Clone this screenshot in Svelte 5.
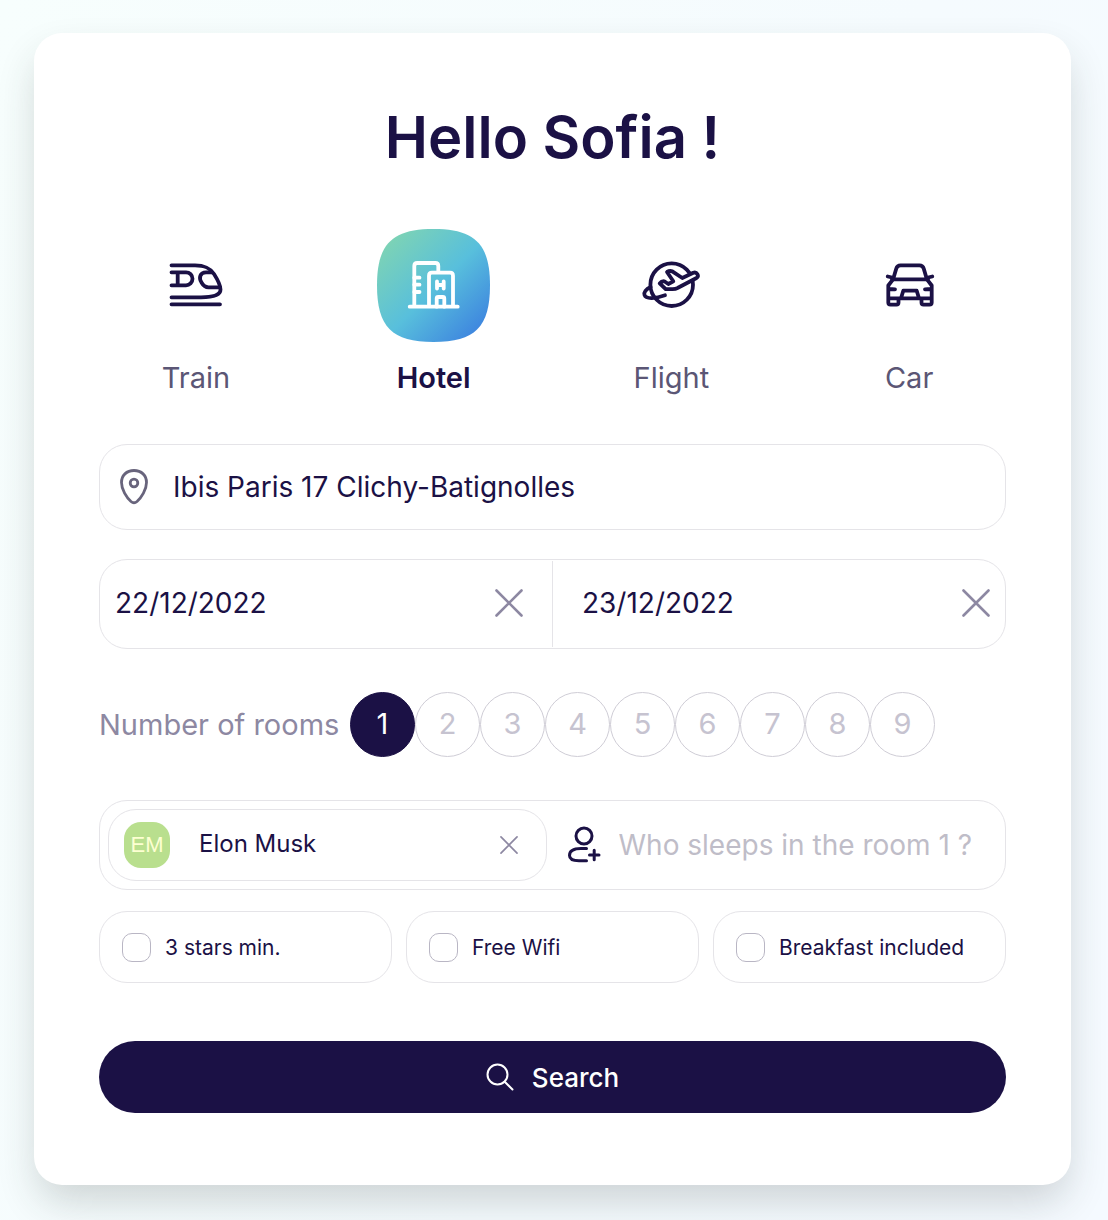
<script lang="ts">
	const tabs = ['Train', 'Hotel', 'Flight', 'Car'];
	const rooms = [1, 2, 3, 4, 5, 6, 7, 8, 9];
	const options = ['3 stars min.', 'Free Wifi', 'Breakfast included'];

	let activeTab = $state('Hotel');
	let activeRoom = $state(1);
	let place = $state('Ibis Paris 17 Clichy-Batignolles');
	let checkIn = $state('22/12/2022');
	let checkOut = $state('23/12/2022');
	let guest = $state('');
	let hasGuest = $state(true);
</script>

{#snippet cross()}
	<svg class="cross" viewBox="0 0 28 28" aria-hidden="true">
		<path d="M1.5 1.5 26.5 26.5M26.5 1.5 1.5 26.5" />
	</svg>
{/snippet}

<main class="card">
	<h1>Hello Sofia !</h1>

	<nav class="tabs">
		{#each tabs as tab}
			<button class="tab" class:active={activeTab === tab} onclick={() => (activeTab = tab)}>
				<svg class="tab-icon" viewBox="0 0 113 113" aria-hidden="true">
					{#if activeTab === tab}
						<defs>
							<linearGradient id="tile" x1="0" y1="0" x2="1" y2="1">
								<stop offset="0.1" stop-color="#7dd3b5" />
								<stop offset="0.52" stop-color="#58bfdc" />
								<stop offset="0.9" stop-color="#3e86df" />
							</linearGradient>
						</defs>
						<path
							class="tile"
							fill="url(#tile)"
							d="M56.5 0C98 0 113 15 113 56.5S98 113 56.5 113 0 98 0 56.5 15 0 56.5 0Z"
						/>
					{/if}
					{#if tab === 'Train'}
						<path d="M32.5 36.3H56C66 36.3 71 39 75 45C78.5 50.5 81.5 56 81.5 60.5C81.5 66 74 68.3 62 68.3H32.5M32.5 75.3H81" />
						<path d="M32.5 43.3H47A6.5 6.5 0 0 1 47 56.3H32.5M38.7 43.3V56.3M73 43.3H67C61 43.3 59.5 49 62.5 53.5C64.5 57 66 58.3 69.5 58.3H81" />
					{:else if tab === 'Hotel'}
						<path d="M32.7 77.7H80.7M37.3 77.7V37Q37.3 34 40.3 34H58.3Q61.3 34 61.3 37V43.7M52 77.7V46.7Q52 43.7 55 43.7H73Q76 43.7 76 46.7V77.7" />
						<path d="M37.3 48.7H42.5M37.3 55.7H42.5M37.3 63H42.5M60 52.5V59.5M66.7 52.5V59.5M60 56H66.7M59.7 77.7V69.5Q59.7 68 61.2 68H65.8Q67.3 68 67.3 69.5V77.7" />
					{:else if tab === 'Flight'}
						<circle cx="56.7" cy="55.7" r="21.3" />
						<path class="plane" d="M78.3 43.7C82 42.5 84.5 47 81.5 49L63 58.8Q60.5 60.2 57.5 60.2H50.7L44.7 54.3Q46.5 52 49.3 52.3L53.3 55 58.3 52.3 52 43Q54.5 41.5 57.3 42.3L67.3 49Z" />
						<path d="M35.5 58C31 60 28.5 63.5 29.5 66C31 70.5 41 69.5 50 66.3" />
					{:else}
						<path d="M40.5 49 43.3 39.5Q44.2 36.3 47.5 36.3H66.5Q69.8 36.3 70.7 39.5L73.5 49M34.7 47.5 39 48.5M79.3 47.5 75 48.5M39 50.3H75" />
						<path d="M40 50.3 35.3 56.5V73.5Q35.3 75.7 37.5 75.7H43.5Q45.5 75.7 45.5 73.5V69.5M74 50.3 78.7 56.5V73.5Q78.7 75.7 76.5 75.7H70.5Q68.5 75.7 68.5 73.5V69.5M35.3 69.3H78.7M48 69.3 50.3 61.7H63.7L66 69.3M36.5 60 42 60.3M77.5 60 72 60.3" />
					{/if}
				</svg>
				<span>{tab}</span>
			</button>
		{/each}
	</nav>

	<form onsubmit={(e) => e.preventDefault()}>
		<div class="field place">
			<svg class="pin" viewBox="0 0 30 36" aria-hidden="true">
				<path d="M15 1.5C7.500 1.5 2.5 6.5 2.5 13.5C2.5 20.5 7.5 28.5 12 32.500Q15 35 18 32.5C22.5 28.5 27.5 20.5 27.5 13.5C27.5 6.5 22.5 1.5 15 1.5Z" />
				<circle cx="15" cy="14" r="3.8" />
			</svg>
			<input type="text" aria-label="Destination" bind:value={place} />
		</div>

		<div class="field dates">
			<div class="date">
				<input type="text" aria-label="Check-in" bind:value={checkIn} />
				<button type="button" aria-label="Clear check-in" onclick={() => (checkIn = '')}>
					{@render cross()}
				</button>
			</div>
			<div class="date">
				<input type="text" aria-label="Check-out" bind:value={checkOut} />
				<button type="button" aria-label="Clear check-out" onclick={() => (checkOut = '')}>
					{@render cross()}
				</button>
			</div>
		</div>

		<div class="rooms">
			<span class="rooms-label" id="rooms-label">Number of rooms</span>
			<div class="room-list" role="group" aria-labelledby="rooms-label">
				{#each rooms as room}
					<button
						type="button"
						class="room"
						class:selected={activeRoom === room}
						aria-pressed={activeRoom === room}
						onclick={() => (activeRoom = room)}>{room}</button
					>
				{/each}
			</div>
		</div>

		<div class="field guests">
			{#if hasGuest}
				<div class="chip">
					<span class="avatar">EM</span>
					<span class="guest-name">Elon Musk</span>
					<button type="button" aria-label="Remove Elon Musk" onclick={() => (hasGuest = false)}>
						{@render cross()}
					</button>
				</div>
			{/if}
			<label class="add-guest">
				<svg class="person" viewBox="0 0 34 38" aria-hidden="true">
					<circle cx="17" cy="10" r="8" />
					<path d="M19.5 22.5H14C6 22.5 2.5 25.5 2.5 29.5C2.5 33.5 6 34.7 12 34.7H19.5M22.5 29H32M27.2 24.2V33.8" />
				</svg>
				<input type="text" aria-label="Guest" placeholder="Who sleeps in the room {activeRoom} ?" bind:value={guest} />
			</label>
		</div>

		<div class="options">
			{#each options as option}
				<label class="field option">
					<input type="checkbox" />
					<span>{option}</span>
				</label>
			{/each}
		</div>

		<button class="search" type="submit">
			<svg viewBox="0 0 28 28" aria-hidden="true">
				<circle cx="11.5" cy="11.5" r="10" />
				<path d="M18.7 18.7 26.5 26.5" />
			</svg>
			Search
		</button>
	</form>
</main>

<style>
	:global(body) {
		background: linear-gradient(110deg, #f7fefd 0%, #f5fbfe 60%, #f5faff 100%);
		font-family: Inter, 'Liberation Sans', sans-serif;
		color: #1b1145;
	}

	.card {
		box-sizing: border-box;
		margin: 33px 37px 35px 34px;
		padding: 72px 65px;
		background: #fff;
		border-radius: 28px;
		box-shadow: 0 20px 40px -4px rgba(40, 50, 45, 0.2);
	}

	h1 {
		margin: 0;
		font-size: 58px;
		font-weight: 600;
		line-height: 64px;
		text-align: center;
	}

	button,
	input {
		margin: 0;
		padding: 0;
		border: 0;
		background: none;
		color: inherit;
		font: inherit;
	}

	button {
		cursor: pointer;
	}

	input {
		min-width: 0;
		outline: none;
	}

	svg {
		flex: none;
		fill: none;
		stroke: currentColor;
		stroke-linecap: round;
		stroke-linejoin: round;
	}

	.tabs {
		display: grid;
		grid-template-columns: repeat(4, 1fr);
		margin: 60px -22px 48px;
	}

	.tab {
		display: flex;
		flex-direction: column;
		align-items: center;
		gap: 18px;
		font-size: 29px;
		line-height: 36px;
	}

	.tab span {
		color: #5b5675;
	}

	.tab.active {
		font-weight: 600;
	}

	.tab.active span {
		color: #1b1145;
	}

	.tab-icon {
		width: 113px;
		height: 113px;
		stroke-width: 3.8;
	}

	.active .tab-icon {
		color: #fff;
	}

	.tile {
		stroke: none;
	}

	.plane {
		fill: #fff;
	}

	.active .plane {
		fill: #58bfdc;
	}

	.field {
		box-sizing: border-box;
		display: flex;
		align-items: center;
		border: 1px solid #e5e4e8;
		border-radius: 28px;
	}

	.place {
		height: 86px;
		padding: 0 19px;
		gap: 24px;
		font-size: 28px;
	}

	.place input {
		flex: 1;
	}

	.pin {
		width: 30px;
		height: 36px;
		color: #68647c;
		stroke-width: 2.8;
	}

	.dates {
		height: 90px;
		margin-top: 29px;
		font-size: 28px;
	}

	.date {
		flex: 1;
		display: flex;
		align-items: center;
		justify-content: space-between;
		box-sizing: border-box;
		height: 86px;
		min-width: 0;
		padding: 0 29px 3px 15px;
	}

	.date + .date {
		padding: 0 15px 3px 29px;
		border-left: 1px solid #e5e4e8;
	}

	.date input {
		flex: 1;
	}

	.date button,
	.chip button {
		display: flex;
		color: #8d88a2;
	}

	.cross {
		width: 28px;
		height: 28px;
		stroke-width: 2.6;
	}

	.rooms {
		display: flex;
		align-items: center;
		margin: 43px 0;
		font-size: 29px;
	}

	.rooms-label {
		flex: 0 0 251px;
		color: #8d88a2;
		white-space: nowrap;
	}

	.room-list {
		display: flex;
	}

	.room {
		box-sizing: border-box;
		width: 65px;
		height: 65px;
		padding-bottom: 2px;
		border: 1px solid #cfcdd6;
		border-radius: 50%;
		color: #c6c3d0;
	}

	.room.selected {
		border-color: #1b1145;
		background: #1b1145;
		color: #fff;
	}

	.guests {
		height: 90px;
		padding: 0 20px 0 8px;
		gap: 20px;
	}

	.chip {
		flex: 0 0 50%;
		box-sizing: border-box;
		display: flex;
		align-items: center;
		height: 72px;
		padding: 0 28px 0 15px;
		border: 1px solid #e5e4e8;
		border-radius: 28px;
		font-size: 24px;
	}

	.avatar {
		width: 46px;
		border-radius: 17px;
		background: #b9df8e;
		color: #fdffd2;
		font-family: 'Liberation Sans', Arial, sans-serif;
		font-size: 22px;
		line-height: 46px;
		text-align: center;
	}

	.guest-name {
		flex: 1;
		margin-left: 29px;
		padding-bottom: 3px;
	}

	.chip .cross {
		width: 18px;
		height: 18px;
	}

	.add-guest {
		flex: 1;
		display: flex;
		align-items: center;
		gap: 18px;
		min-width: 0;
		font-size: 28px;
	}

	.add-guest input {
		flex: 1;
	}

	.add-guest input::placeholder {
		color: #bfbdc8;
		opacity: 1;
	}

	.person {
		width: 34px;
		height: 38px;
		stroke-width: 3;
	}

	.options {
		display: grid;
		grid-template-columns: repeat(3, 1fr);
		gap: 14px;
		margin-top: 21px;
	}

	.option {
		height: 72px;
		padding: 0 22px;
		gap: 14px;
		font-size: 21px;
		white-space: nowrap;
	}

	.option input {
		appearance: none;
		box-sizing: border-box;
		width: 29px;
		height: 29px;
		border: 1px solid #b9b6c4;
		border-radius: 10px;
	}

	.option input:checked {
		background: #1b1145;
	}

	.search {
		display: flex;
		align-items: center;
		justify-content: center;
		gap: 18px;
		width: 100%;
		height: 72px;
		margin-top: 58px;
		border-radius: 36px;
		background: #1b1145;
		color: #fff;
		font-size: 26px;
		font-weight: 500;
	}

	.search svg {
		width: 28px;
		height: 28px;
		stroke-width: 2;
	}
</style>
